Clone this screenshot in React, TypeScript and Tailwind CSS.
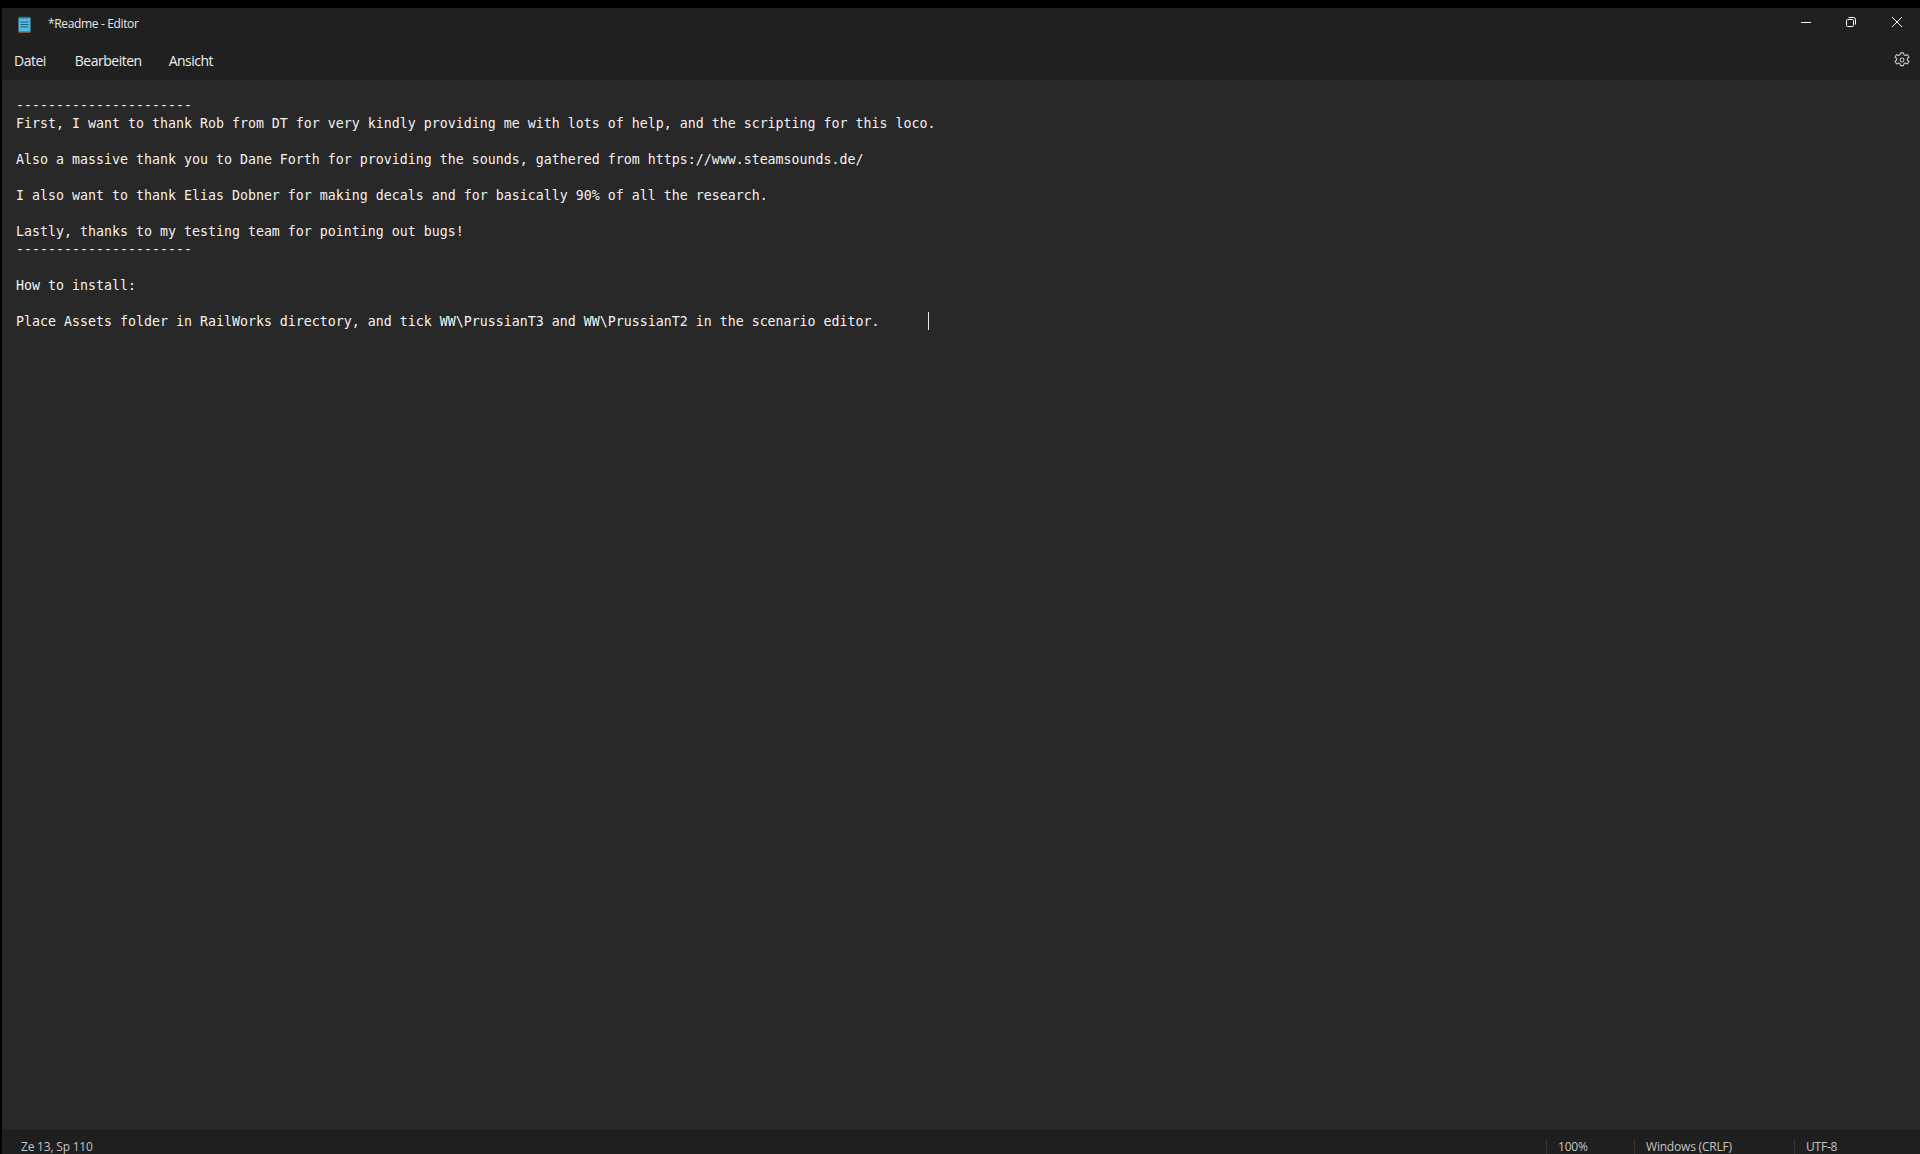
const LINES = [
  '----------------------',
  'First, I want to thank Rob from DT for very kindly providing me with lots of help, and the scripting for this loco.',
  '',
  'Also a massive thank you to Dane Forth for providing the sounds, gathered from https://www.steamsounds.de/',
  '',
  'I also want to thank Elias Dobner for making decals and for basically 90% of all the research.',
  '',
  'Lastly, thanks to my testing team for pointing out bugs!',
  '----------------------',
  '',
  'How to install:',
  '',
];
const LAST_LINE = 'Place Assets folder in RailWorks directory, and tick WW\\PrussianT3 and WW\\PrussianT2 in the scenario editor.      ';

function NotepadIcon() {
  return (
    <svg width="13" height="17" viewBox="0 0 13 17" className="ml-[16px] mr-[1px]">
      <rect x="0.5" y="1.5" width="12" height="14" fill="#56bbe4" />
      <path d="M0.5 15.5h12v1h-12z" fill="#c98a4b" />
      <path d="M2.5 0.5v2.5M5 0.5v2.5M7.5 0.5v2.5M10 0.5v2.5" stroke="#1d6f94" strokeWidth="1.2" />
      <path d="M2.5 6h8M2.5 8.5h8M2.5 11h8" stroke="#17617f" strokeWidth="1.1" />
    </svg>
  );
}

export default function App() {
  return (
    <div className="h-screen flex flex-col overflow-hidden bg-[#202020] border-t-8 border-l-2 border-black text-white font-['Open_Sans',sans-serif]">
      <div className="h-[32px] shrink-0 flex items-center">
        <NotepadIcon />
        <span className="ml-[16px] text-[12px] text-[#e8e8e8] tracking-[-0.35px]">*Readme - Editor</span>
        <div className="ml-auto flex items-center text-white -mt-[4px]">
          <svg width="12" height="12" viewBox="0 0 12 12" className="mr-[33px]">
            <path d="M1 6.5h10" stroke="#fff" strokeWidth="1" />
          </svg>
          <svg width="12" height="12" viewBox="0 0 12 12" className="mr-[34px]" fill="none" stroke="#fff" strokeWidth="1">
            <rect x="1.5" y="3.5" width="7" height="7" rx="1" />
            <path d="M3.5 1.5h5a2 2 0 0 1 2 2v5" />
          </svg>
          <svg width="12" height="12" viewBox="0 0 12 12" className="mr-[17px]" fill="none" stroke="#fff" strokeWidth="1">
            <path d="M1 1l10 10M11 1L1 11" />
          </svg>
        </div>
      </div>

      <div className="h-[40px] shrink-0 flex items-center text-[14px] text-[#f0f0f0] tracking-[-0.5px]">
        <span className="ml-[12px]">Datei</span>
        <span className="ml-[29px]">Bearbeiten</span>
        <span className="ml-[27px]">Ansicht</span>
        <svg width="18" height="18" viewBox="0 0 24 24" fill="none" stroke="#c8c8c8" strokeWidth="1.4" className="ml-auto mr-[9px]">
          <path d="M10 2.5h4l.7 2.8 1.9.8 2.5-1.5 2.2 3.4-2.2 2v2l2.2 2-2.2 3.4-2.5-1.5-1.9.8-.7 2.8h-4l-.7-2.8-1.9-.8-2.5 1.5-2.2-3.4 2.2-2v-2l-2.2-2 2.2-3.4 2.5 1.5 1.9-.8z" strokeLinejoin="round" />
          <circle cx="12" cy="12" r="2.6" />
        </svg>
      </div>

      <main className="flex-1 min-h-0 bg-[#282828] pt-[17px] pl-[14px] font-['DejaVu_Sans_Mono',monospace] text-[13.29px] leading-[18px] text-[#f2f2f2] whitespace-pre">
        {LINES.map((line, i) => (
          <div key={i} className="h-[18px]">{line}</div>
        ))}
        <div className="h-[18px] flex items-start">
          <span>{LAST_LINE}</span>
          <span className="w-px h-[18px] -mt-px bg-[#e8e8e8]" />
        </div>
      </main>

      <footer className="h-[24px] shrink-0 bg-[#1f1f1f] border-t border-[#1b1b1b] flex items-start text-[12px] text-[#c4c4c4] tracking-[-0.2px]">
        <span className="ml-[19px] mt-[9px] leading-[14px]">Ze 13, Sp 110</span>
        <div className="ml-auto flex items-start mt-[8px] h-[15px]">
          <div className="w-[88px] h-full border-l border-[#333] pl-[11px] pt-px leading-[14px]">100%</div>
          <div className="w-[160px] h-full border-l border-[#333] pl-[11px] pt-px leading-[14px]">Windows (CRLF)</div>
          <div className="w-[126px] h-full border-l border-[#333] pl-[11px] pt-px leading-[14px]">UTF-8</div>
        </div>
      </footer>
    </div>
  );
}
